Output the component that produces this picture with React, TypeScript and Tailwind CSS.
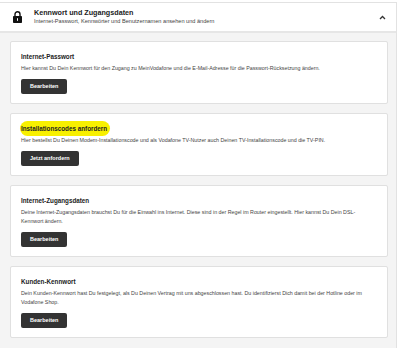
import React from 'react';

interface Section {
  title: string;
  lines: string[];
  action: string;
  highlight?: boolean;
}

const sections: Section[] = [
  {
    title: 'Internet-Passwort',
    lines: ['Hier kannst Du Dein Kennwort für den Zugang zu MeinVodafone und die E-Mail-Adresse für die Passwort-Rücksetzung ändern.'],
    action: 'Bearbeiten',
  },
  {
    title: 'Installationscodes anfordern',
    lines: ['Hier bestellst Du Deinen Modem-Installationscode und als Vodafone TV-Nutzer auch Deinen TV-Installationscode und die TV-PIN.'],
    action: 'Jetzt anfordern',
    highlight: true,
  },
  {
    title: 'Internet-Zugangsdaten',
    lines: [
      'Deine Internet-Zugangsdaten brauchst Du für die Einwahl ins Internet. Diese sind in der Regel im Router eingestellt. Hier kannst Du Dein DSL-',
      'Kennwort ändern.',
    ],
    action: 'Bearbeiten',
  },
  {
    title: 'Kunden-Kennwort',
    lines: [
      'Dein Kunden-Kennwort hast Du festgelegt, als Du Deinen Vertrag mit uns abgeschlossen hast. Du identifizierst Dich damit bei der Hotline oder im',
      'Vodafone Shop.',
    ],
    action: 'Bearbeiten',
  },
];

const LockIcon = () => (
  <svg width="9" height="12" viewBox="0 0 9 12">
    <path d="M2 5V3.3a2.5 2.5 0 0 1 5 0V5" fill="none" stroke="#111" strokeWidth="1.4" />
    <rect x="0" y="5" width="9" height="7" rx="0.8" fill="#111" />
    <rect x="4" y="7.2" width="1" height="2.6" fill="#fff" />
  </svg>
);

const ChevronUp = () => (
  <svg width="7" height="5" viewBox="0 0 7 5">
    <polyline points="1,4 3.5,1.5 6,4" fill="none" stroke="#333" strokeWidth="1.3" />
  </svg>
);

const App: React.FC = () => {
  return (
    <div className="w-[400px] h-[348px] overflow-hidden bg-white pt-[2px] font-['Liberation_Sans',Arial,sans-serif] text-[#333]">
      <div className="mr-[3px] border border-l-0 border-[#e2e2e2]">
        {/* Accordion header */}
        <div className="flex items-center h-[30px] bg-white border-b-2 border-[#e6e6e6]">
          <div className="w-[34px] flex justify-center pl-[1px]">
            <LockIcon />
          </div>
          <div className="flex-1">
            <div className="text-[7.2px] font-bold leading-[8px] text-[#222]">Kennwort und Zugangsdaten</div>
            <div className="text-[5.6px] leading-[8px] text-[#444]">
              Internet-Passwort, Kennwörter und Benutzernamen ansehen und ändern
            </div>
          </div>
          <div className="pr-[10px]">
            <ChevronUp />
          </div>
        </div>

        {/* Accordion body */}
        <div className="bg-[#f4f4f4] pl-[10px] pr-[8px] pt-[8px] pb-[10px] flex flex-col gap-[9px]">
          {sections.map((s) => (
            <div key={s.title} className="bg-white border border-[#e0e0e0] rounded-[2px] px-[10px] pt-[10px] pb-[9px]">
              <div className="h-[9px] flex items-center">
                {s.highlight ? (
                  <span className="text-[6.3px] font-bold leading-[15px] text-[#222] bg-[#f8f000] rounded-[8px] px-[1px] -ml-[1px] pr-[3px]">
                    {s.title}
                  </span>
                ) : (
                  <span className="text-[6.3px] font-bold leading-[9px] text-[#222]">{s.title}</span>
                )}
              </div>
              <p className="mt-[3px] text-[5.3px] leading-[9px] text-[#444]">
                {s.lines.map((l, i) => (
                  <React.Fragment key={i}>
                    {i > 0 && <br />}
                    {l}
                  </React.Fragment>
                ))}
              </p>
              <button className="block mt-[6px] h-[15px] px-[9px] bg-[#333] text-white text-[5.5px] font-bold rounded-[2px]">
                {s.action}
              </button>
            </div>
          ))}
        </div>
      </div>
    </div>
  );
};

export default App;
